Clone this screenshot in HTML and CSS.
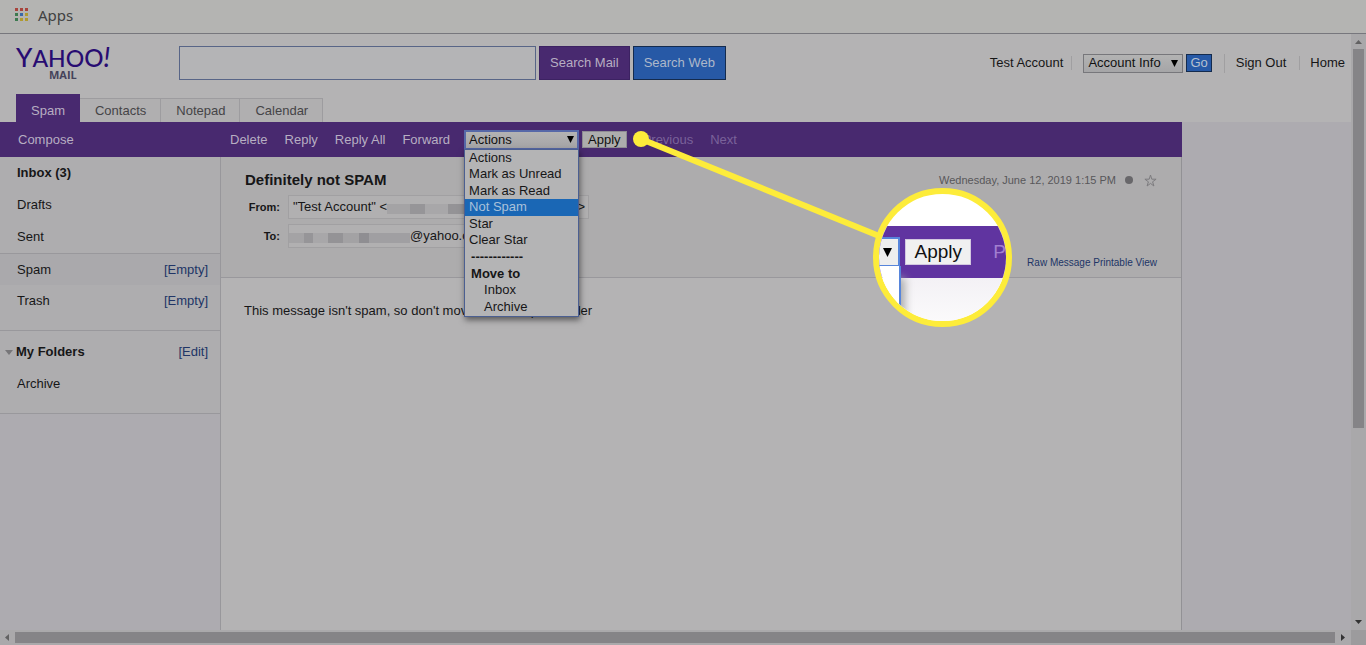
FILE: index.html
```html
<!DOCTYPE html>
<html lang="en">
<head>
<meta charset="utf-8">
<title>Yahoo Mail</title>
<link rel="stylesheet" href="styles.css">
</head>
<body>
<nav class="bookmarks">
  <svg class="apps-icon" viewBox="0 0 13 13" aria-hidden="true">
    <path fill="#a8443c" d="M0 0h3v3H0zM5 0h3v3H5zM10 0h3v3h-3z"/>
    <path fill="#3d7a50" d="M0 5h3v3H0zM0 10h3v3H0z"/>
    <path fill="#3a68a8" d="M5 5h3v3H5z"/>
    <path fill="#b09a30" d="M10 5h3v3h-3zM5 10h3v3H5zM10 10h3v3h-3z"/>
  </svg>
  <a class="apps-link" href="#">Apps</a>
</nav>
<div class="viewport">
  <div class="page">
    <header class="masthead">
      <a class="logo" href="#"><span class="logo-name"><span class="logo-y">Y</span>AHO<span class="logo-o">O</span><span class="logo-bang">!</span></span><span class="logo-mail">MAIL</span></a>
      <form class="search">
        <input class="search-box" type="text" aria-label="Search">
        <button class="search-btn" type="button">Search Mail</button>
        <button class="search-btn search-web" type="button">Search Web</button>
      </form>
      <div class="account">
        <span class="account-name">Test Account</span>
        <div class="account-jump">
          <span class="select-wrap">
            <select class="select account-select" aria-label="Account"><option>Account Info</option></select>
            <svg class="select-arrow" viewBox="0 0 7 7" aria-hidden="true"><path d="M0 0h7L3.500 7z"/></svg>
          </span>
          <button class="go" type="button">Go</button>
        </div>
        <a class="account-link" href="#">Sign Out</a>
        <a class="account-link" href="#">Home</a>
      </div>
    </header>
    <nav class="tabs">
      <a class="tab tab-active" href="#">Spam</a>
      <a class="tab" href="#">Contacts</a>
      <a class="tab" href="#">Notepad</a>
      <a class="tab" href="#">Calendar</a>
    </nav>
    <div class="workspace">
      <div class="mail">
        <div class="toolbar">
          <a class="compose" href="#">Compose</a>
          <div class="tools">
            <button class="tool" type="button">Delete</button>
            <button class="tool" type="button">Reply</button>
            <button class="tool" type="button">Reply All</button>
            <button class="tool" type="button">Forward</button>
            <div class="actions">
              <span class="select-wrap">
                <select class="select actions-select" aria-label="Actions"><option>Actions</option></select>
                <svg class="select-arrow" viewBox="0 0 7 7" aria-hidden="true"><path d="M0 0h7L3.500 7z"/></svg>
              </span>
              <ul class="menu" role="listbox" aria-label="Actions">
                <li role="option">Actions</li>
                <li role="option">Mark as Unread</li>
                <li role="option">Mark as Read</li>
                <li role="option" class="chosen" aria-selected="true">Not Spam</li>
                <li role="option">Star</li>
                <li role="option">Clear Star</li>
                <li class="group">------------</li>
                <li class="group">Move to</li>
                <li role="option" class="nested">Inbox</li>
                <li role="option" class="nested">Archive</li>
              </ul>
            </div>
            <button class="apply" type="button">Apply</button>
            <button class="tool pager" type="button" disabled>Previous</button>
            <button class="tool pager" type="button" disabled>Next</button>
          </div>
        </div>
        <div class="columns">
          <aside class="sidebar">
            <ul class="folders">
              <li class="folder"><a class="inbox" href="#">Inbox (3)</a></li>
              <li class="folder"><a href="#">Drafts</a></li>
              <li class="folder"><a href="#">Sent</a></li>
              <li class="folder current"><a href="#">Spam</a><a class="side-action" href="#">[Empty]</a></li>
              <li class="folder"><a href="#">Trash</a><a class="side-action" href="#">[Empty]</a></li>
            </ul>
            <div class="my-folders">
              <div class="folder folder-title">
                <svg class="twisty" viewBox="0 0 8 5" aria-hidden="true"><path d="M0 0h8L4 5z"/></svg>
                <strong>My Folders</strong><a class="side-action" href="#">[Edit]</a>
              </div>
              <div class="folder"><a href="#">Archive</a></div>
            </div>
          </aside>
          <main class="message">
            <header class="message-head">
              <div class="title-row">
                <h1 class="subject">Definitely not SPAM</h1>
                <time class="date">Wednesday, June 12, 2019 1:15 PM</time>
                <span class="unread-dot"></span>
                <svg class="star" viewBox="0 0 13 13" role="img" aria-label="Star"><path d="M6.500 1l1.300 4.200h4.300L8.600 7.800 9.900 12 6.500 9.400 3.100 12l1.300-4.200L.9 5.200h4.300z"/></svg>
              </div>
              <dl class="people">
                <dt>From:</dt>
                <dd class="person from"><span>"Test Account" &lt;</span><span class="redacted"></span><span>&gt;</span></dd>
                <dt>To:</dt>
                <dd class="person to"><span class="redacted"></span><span>@yahoo.com</span></dd>
              </dl>
              <div class="views"><a href="#">Raw Message</a> <a href="#">Printable View</a></div>
            </header>
            <p class="body-text">This message isn't spam, so don't move it to the spam folder</p>
          </main>
        </div>
      </div>
    </div>
  </div>
  <div class="vbar" aria-hidden="true">
    <svg class="arrow faint" viewBox="0 0 7 4"><path d="M0 4h7L3.500 0z"/></svg>
    <div class="vtrack"><div class="vthumb"></div></div>
    <svg class="arrow" viewBox="0 0 7 4"><path d="M0 0h7L3.500 4z"/></svg>
  </div>
</div>
<div class="hbar" aria-hidden="true">
  <svg class="side-arrow faint" viewBox="0 0 4 7"><path d="M4 0v7L0 3.500z"/></svg>
  <div class="hthumb"></div>
  <svg class="side-arrow" viewBox="0 0 4 7"><path d="M0 0v7l4-3.500z"/></svg>
  <div class="corner"></div>
</div>
<svg class="pointer" viewBox="0 0 260 120" aria-hidden="true">
  <path d="M11 19L254 118" stroke="#fdec3a" stroke-width="6"/>
  <circle cx="11" cy="19" r="8" fill="#fdec3a"/>
</svg>
<div class="lens">
  <div class="lens-bar">
    <span class="lens-select"><svg class="lens-arrow" viewBox="0 0 9 9" aria-hidden="true"><path d="M0 0h9L4.500 9z"/></svg></span>
    <button class="lens-apply" type="button">Apply</button>
    <span class="lens-next">P</span>
  </div>
  <div class="lens-below"><div class="lens-menu"></div></div>
</div>
</body>
</html>
```
FILE: styles.css
```css
* { box-sizing: border-box; }

body {
  position: relative;
  display: flex;
  flex-direction: column;
  min-height: 100vh;
  margin: 0;
  background: #b4b3b4;
  color: #161617;
  font: 13px/16px "Liberation Sans", Arial, sans-serif;
}

a { color: inherit; text-decoration: none; }
button, input, select { margin: 0; font: inherit; }
ul, dl { margin: 0; padding: 0; list-style: none; }

/* Bookmarks bar */
.bookmarks {
  display: flex;
  align-items: center;
  gap: 10px;
  height: 34px;
  padding: 0 15px 4px;
  border-bottom: 1px solid #77777d;
  background: #b4b4b2;
}
.apps-icon { width: 13px; height: 13px; }
.apps-link { color: #414141; font: 15px/20px "Noto Sans", sans-serif; }

.viewport { display: flex; flex: 1; }
.page { display: flex; flex: 1; flex-direction: column; min-width: 0; }

/* Masthead */
.masthead {
  display: flex;
  align-items: center;
  height: 60px;
  padding: 0 6px 2px 16px;
}
.logo {
  display: flex;
  flex-direction: column;
  width: 163px;
  color: #280c72;
  font-family: Lato, sans-serif;
}
.logo-name { font-size: 23px; font-weight: 500; line-height: 23px; }
.logo-y { font-size: 26px; }
.logo-o { font-size: 24px; }
.logo-bang { font-size: 26px; font-style: italic; }
.logo-mail {
  padding-left: 33px;
  color: #45435a;
  font: 700 11px/10px "Open Sans", sans-serif;
}
.search { display: flex; gap: 3px; }
.search-box {
  width: 357px;
  height: 34px;
  padding: 0 8px;
  border: 1px solid #586587;
  background: #b4b4b6;
}
.search-btn {
  height: 34px;
  padding: 0 10px;
  border: 1px solid #3c2262;
  background: #48296f;
  color: #b7aec2;
}
.search-web { border-color: #142b4e; background: #2759a6; color: #adb8ca; }
.account { display: flex; align-items: center; margin-left: auto; }
.account-name { padding-right: 8px; }
.account-jump {
  display: flex;
  align-items: center;
  gap: 3px;
  padding: 0 12px 0 11px;
}
.account-name, .account-jump { border-right: 1px solid #a09fa1; line-height: 14px; }
.account-link { padding: 0 0 0 11px; line-height: 14px; }
.account-link + .account-link {
  margin-left: 13px;
  padding-left: 10px;
  border-left: 1px solid #a09fa1;
}
.select-wrap { position: relative; display: flex; }
.select {
  height: 19px;
  padding: 0 4px;
  border: 1px solid #77777b;
  border-radius: 0;
  appearance: none;
  background: linear-gradient(#b3b3b3, #a5a5a7);
  color: #111;
}
.select-arrow {
  position: absolute;
  top: 6px;
  right: 5px;
  width: 7px;
  height: 7px;
  pointer-events: none;
}
.account-select { width: 100px; }
.go {
  height: 18px;
  padding: 0 3px;
  border: 1px solid #142b4e;
  background: #2759a6;
  color: #b6c0d0;
  line-height: 16px;
}

/* Tabs */
.tabs { display: flex; align-items: flex-end; height: 28px; padding-left: 16px; }
.tab {
  height: 24px;
  padding: 4px 14px 0 15px;
  border: 1px solid #9d9c9f;
  border-width: 1px 1px 0 0;
  background: #b0afb0;
  color: #454447;
}
.tab-active {
  height: 28px;
  padding: 9px 15px 0;
  border: 0;
  background: #48296f;
  color: #b7aec2;
}

/* Mail frame */
.workspace { display: flex; flex: 1; padding-right: 169px; background: #adabb0; }
.mail {
  display: flex;
  flex: 1;
  flex-direction: column;
  min-width: 0;
}
.toolbar {
  display: flex;
  align-items: center;
  height: 35px;
  background: #48296f;
  color: #b7aec2;
}
.compose { width: 230px; padding-left: 18px; }
.tools { display: flex; align-items: center; }
.tool {
  margin-right: 17px;
  padding: 0;
  border: 0;
  background: none;
  color: inherit;
}
.tool:nth-child(4) { margin-right: 14px; }
.actions { position: relative; margin-right: 3px; }
.actions-select { width: 115px; height: 20px; border: 2px solid #5668a8; padding: 0 3px; }
.menu {
  position: absolute;
  z-index: 1;
  top: 19px;
  left: 0;
  display: flex;
  flex-direction: column;
  width: 115px;
  height: 168px;
  border: 1px solid #4b5f91;
  background: #b4b4b5;
  box-shadow: 1px 3px 6px rgba(0, 0, 0, .5);
  color: #161617;
}
.menu li { flex: 1; padding-left: 4px; line-height: 16px; }
.menu .chosen { background: #1a67b5; color: #a9c1da; }
.menu .group { padding-left: 6px; font-weight: 700; }
.menu .nested { padding-left: 19px; }
.apply {
  height: 17px;
  margin-right: 16px;
  padding: 0 5px;
  border: 1px solid #8e8c93;
  background: #adadad;
  color: #111;
  line-height: 15px;
}
.pager { color: #7a629a; }
.columns { display: flex; flex: 1; }

/* Sidebar */
.sidebar { width: 221px; border-right: 1px solid #98979b; background: #adabb0; }
.folders { padding-bottom: 13px; border-bottom: 1px solid #99989c; background: #aeadaf; }
.folder {
  display: flex;
  align-items: center;
  justify-content: space-between;
  height: 32px;
  padding: 0 12px 0 17px;
}
.inbox { font-weight: 700; }
.current { border-top: 1px solid #99989c; background: #aaa9ac; }
.side-action { color: #213566; }
.my-folders { padding: 5px 0 13px; border-bottom: 1px solid #99989c; background: #aeadaf; }
.folder-title { gap: 3px; padding-left: 5px; }
.folder-title .side-action { margin-left: auto; }
.twisty { width: 8px; height: 5px; fill: #777679; }

/* Message */
.message { flex: 1; border-right: 1px solid #929195; background: #b4b3b4; }
.message-head {
  height: 121px;
  padding: 13px 24px 0;
  border-bottom: 1px solid #99989c;
  background: #adacad;
}
.title-row { display: flex; align-items: center; height: 20px; }
.subject { margin: 0 auto 0 0; font-size: 15px; line-height: 20px; }
.date { color: #58575a; font-size: 11px; }
.unread-dot {
  width: 8px;
  height: 8px;
  margin: 0 11px 0 9px;
  border-radius: 50%;
  background: #68676a;
}
.star { width: 13px; height: 13px; fill: none; stroke: #7c7b7e; }
.people {
  display: grid;
  grid-template-columns: 35px auto;
  justify-content: start;
  align-items: center;
  gap: 5px 8px;
  padding-top: 5px;
}
.people dt { font-size: 11px; font-weight: 700; text-align: right; }
.person {
  display: flex;
  align-items: center;
  width: 301px;
  height: 24px;
  margin: 0;
  border: 1px solid #a1a0a2;
  background: #b1b0b1;
}
.from { padding: 0 3px 0 4px; }
.redacted {
  flex: 1;
  height: 10px;
  margin-top: 4px;
  background: linear-gradient(90deg, #a4a3a5 0 12%, #969598 0 20%, #a8a7a9 0 32%, #949396 0 45%, #a3a2a4 0 58%, #8f8e92 0 66%, #a09fa2 0);
}
.to { width: 220px; }
.to .redacted { flex: none; width: 121px; }
.views {
  padding-top: 9px;
  color: #213566;
  font-size: 10px;
  line-height: 12px;
  text-align: right;
}
.body-text { margin: 0; padding: 25px 23px; }

/* Scroll bars */
.vbar {
  display: flex;
  flex-direction: column;
  align-items: center;
  width: 15px;
  padding: 6px 0;
  background: #a9a8aa;
}
.vtrack { flex: 1; padding: 5px 0; }
.vthumb { width: 11px; height: 67%; background: #858487; }
.arrow { width: 7px; height: 4px; fill: #333; }
.faint { opacity: .6; }
.hbar { display: flex; align-items: center; height: 15px; background: #aaa9ab; }
.hbar .side-arrow { width: 4px; height: 7px; margin: 0 6px; fill: #333; }
.hbar .faint { margin: 0 6px 0 5px; }
.hthumb { flex: 1; height: 11px; background: #858487; }
.corner { width: 15px; height: 15px; background: #9c9b9d; }

/* Magnified callout over the page */
.pointer {
  position: absolute;
  z-index: 2;
  top: 120px;
  left: 630px;
  width: 260px;
  height: 120px;
}
.lens {
  position: absolute;
  z-index: 3;
  top: 188px;
  left: 873px;
  display: flex;
  flex-direction: column;
  width: 139px;
  height: 139px;
  padding-top: 32px;
  overflow: hidden;
  border: 6px solid #fdec3a;
  border-radius: 50%;
  background: #fff;
}
.lens-bar { display: flex; align-items: center; height: 52px; background: #6034a0; }
.lens-select {
  display: flex;
  align-items: center;
  justify-content: flex-end;
  width: 22px;
  height: 30px;
  margin-right: 5px;
  padding-right: 6px;
  border: 2px solid #5785db;
  border-left: 0;
  background: #eee;
}
.lens-arrow { width: 9px; height: 9px; }
.lens-apply {
  width: 69px;
  height: 26px;
  padding: 0;
  border: 1px solid #d2c8df;
  background: #f0f0f0;
  color: #111;
  font-size: 19px;
  line-height: 24px;
}
.lens-next { margin-left: 22px; color: #a27fd0; font-size: 19px; }
.lens-below { display: flex; flex: 1; background: linear-gradient(#f3f1f5, #fbfafb); }
.lens-menu {
  width: 22px;
  margin-top: -12px;
  border-right: 2px solid #5785db;
  background: #fff;
  box-shadow: 4px 12px 8px #aaa;
}
```
